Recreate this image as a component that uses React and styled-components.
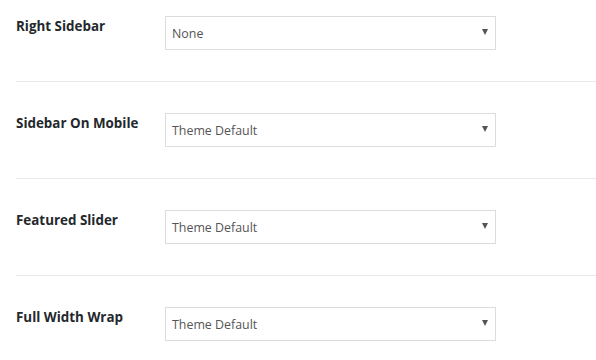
import styled, { createGlobalStyle } from "styled-components";

const GlobalStyle = createGlobalStyle`
  body {
    margin: 0;
    background: #fff;
    font-family: "Open Sans", "Noto Sans", sans-serif;
  }
`;

const Page = styled.div`
  width: 596px;
  padding-left: 16px;
  box-sizing: border-box;
`;

const Row = styled.div`
  display: flex;
  align-items: flex-start;
  padding: ${(p) => (p.$first ? "16px" : "31px")} 0 31px;
  border-top: ${(p) => (p.$first ? "none" : "1px solid #e8e8e8")};
`;

const Label = styled.div`
  width: 149px;
  flex-shrink: 0;
  padding-top: 1px;
  color: #23282d;
  font-size: 13.4px;
  font-weight: 700;
  line-height: 18px;
`;

const Select = styled.div`
  display: flex;
  align-items: center;
  justify-content: space-between;
  width: 331px;
  height: 34px;
  box-sizing: border-box;
  padding: 0 7px 0 6px;
  border: 1px solid #dcdcdc;
  background: #fff;
  color: #555;
  font-size: 12.4px;
`;

const Arrow = styled.span`
  width: 0;
  height: 0;
  margin-top: -2px;
  border-left: 3px solid transparent;
  border-right: 3px solid transparent;
  border-top: 6px solid #555;
`;

const rows = [
  ["Right Sidebar", "None"],
  ["Sidebar On Mobile", "Theme Default"],
  ["Featured Slider", "Theme Default"],
  ["Full Width Wrap", "Theme Default"],
];

export default function App() {
  return (
    <Page>
      <GlobalStyle />
      {rows.map(([label, value], i) => (
        <Row key={label} $first={i === 0}>
          <Label>{label}</Label>
          <Select>
            <span>{value}</span>
            <Arrow />
          </Select>
        </Row>
      ))}
    </Page>
  );
}
